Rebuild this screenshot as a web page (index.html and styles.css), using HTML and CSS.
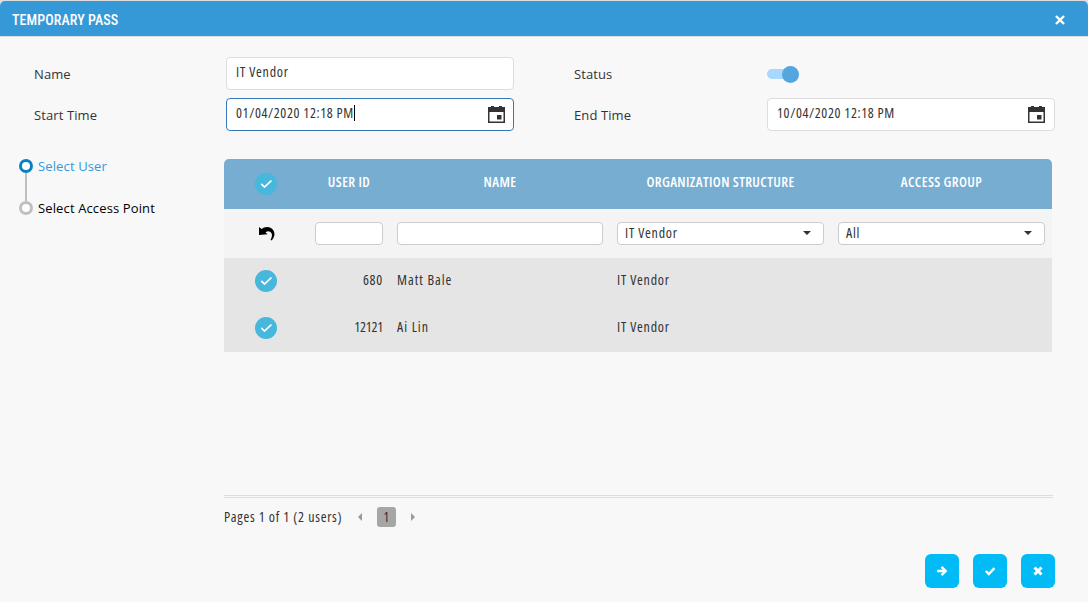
FILE: index.html
```
<!DOCTYPE html>
<html lang="en">
<head>
    <meta charset="utf-8" />
    <title>Temporary Pass</title>
    <meta name="viewport" content="width=device-width, initial-scale=1" />
    <link rel="stylesheet" href="styles.css">
</head>
<body>
    <div class="popup">
        <div class="popup-header">
            <span class="popup-title">TEMPORARY PASS</span>
            <svg class="close" width="10" height="10" viewBox="0 0 10 10"><path d="M1 1l8 8M9 1l-8 8" /></svg>
        </div>

        <div class="form">
            <label class="lbl">Name</label>
            <div class="field"><span>IT Vendor</span></div>
            <label class="lbl">Status</label>
            <div class="switch"><span class="knob"></span></div>

            <label class="lbl">Start Time</label>
            <div class="field active">
                <span class="date">01/04/2020 12:18 PM</span><i class="caret"></i>
                <svg class="cal" width="17" height="17" viewBox="0 0 17 17"><path fill-rule="evenodd" d="M0 1h3V0h3v1h5V0h3v1h3v16H0zM1.500 6v9.500h14V6zM9 9h4.500v4.500H9z" /></svg>
            </div>
            <label class="lbl">End Time</label>
            <div class="field">
                <span class="date">10/04/2020 12:18 PM</span>
                <svg class="cal" width="17" height="17" viewBox="0 0 17 17"><path fill-rule="evenodd" d="M0 1h3V0h3v1h5V0h3v1h3v16H0zM1.500 6v9.500h14V6zM9 9h4.500v4.500H9z" /></svg>
            </div>
        </div>

        <div class="content">
            <div class="steps">
                <div class="step current"><i class="dot"></i><span>Select User</span></div>
                <i class="line"></i>
                <div class="step"><i class="dot"></i><span>Select Access Point</span></div>
            </div>

            <div class="main">
                <div class="grid">
                    <div class="row head">
                        <div class="cell mid"><svg class="check" width="22" height="22" viewBox="0 0 22 22"><circle cx="11" cy="11" r="11" /><path d="M6.300 10.800l3.200 3.200 7-6.500" /></svg></div>
                        <div class="cell mid">USER ID</div>
                        <div class="cell mid">NAME</div>
                        <div class="cell mid">ORGANIZATION STRUCTURE</div>
                        <div class="cell mid">ACCESS GROUP</div>
                    </div>
                    <div class="row filter">
                        <div class="cell mid"><svg class="undo" width="16" height="15" viewBox="0 0 16 15"><path d="M0 1l2.600 2C5 .8 9 .2 12 2c4.500 2.800 4.500 8.500.6 12.500l-1-.7c2-3.500 1.800-6.600-.5-8-1.500-.9-3-.7-4.600.5L8.500 8.200 0 9z" /></svg></div>
                        <div class="cell"><div class="box"></div></div>
                        <div class="cell"><div class="box"></div></div>
                        <div class="cell"><div class="box"><span>IT Vendor</span><i class="arrow"></i></div></div>
                        <div class="cell"><div class="box"><span>All</span><i class="arrow"></i></div></div>
                    </div>
                    <div class="row">
                        <div class="cell mid"><svg class="check" width="22" height="22" viewBox="0 0 22 22"><circle cx="11" cy="11" r="11" /><path d="M6.300 10.800l3.200 3.200 7-6.500" /></svg></div>
                        <div class="cell num">680</div>
                        <div class="cell name">Matt Bale</div>
                        <div class="cell">IT Vendor</div>
                        <div class="cell"></div>
                    </div>
                    <div class="row">
                        <div class="cell mid"><svg class="check" width="22" height="22" viewBox="0 0 22 22"><circle cx="11" cy="11" r="11" /><path d="M6.300 10.800l3.200 3.200 7-6.500" /></svg></div>
                        <div class="cell num tight">12121</div>
                        <div class="cell name">Ai Lin</div>
                        <div class="cell">IT Vendor</div>
                        <div class="cell"></div>
                    </div>
                </div>

                <div class="pager">
                    <span class="pages">Pages 1 of 1 (2 users)</span>
                    <i class="prev"></i>
                    <span class="page">1</span>
                    <i class="next"></i>
                </div>
            </div>
        </div>

        <div class="buttons">
            <div class="btn"><svg width="12" height="12" viewBox="0 0 12 12"><path d="M1 6h8M5.500 1.800L9.700 6l-4.200 4.200" /></svg></div>
            <div class="btn"><svg width="12" height="12" viewBox="0 0 12 12"><path d="M1.800 6l3 3 5.700-5.800" /></svg></div>
            <div class="btn"><svg width="12" height="12" viewBox="0 0 12 12"><path class="thick" d="M2.500 2.500l7 7M9.500 2.500l-7 7" /></svg></div>
        </div>
    </div>
</body>
</html>
```
FILE: styles.css
```
* {
    box-sizing: border-box;
}

body {
    margin: 0;
    background-color: #ddd;
    color: #333;
    font-family: "Open Sans", "Noto Sans", sans-serif;
    font-size: 14px;
    font-stretch: 75%;
    letter-spacing: 0.75px;
    line-height: 18px;
    white-space: nowrap;
}

svg {
    display: block;
}

.popup {
    height: 601px;
    margin-top: 1px;
    background-color: #f8f8f8;
    border-radius: 5px 5px 0 0;
    display: flex;
    flex-direction: column;
}

.popup-header {
    height: 36px;
    flex: none;
    padding: 2px 23px 0 12px;
    background-color: #3699d7;
    border-bottom: 1px solid #ddd;
    border-radius: 5px 5px 0 0;
    color: white;
    font-family: Roboto, sans-serif;
    font-size: 14px;
    font-weight: 500;
    letter-spacing: 0.1px;
    display: flex;
    align-items: center;
    justify-content: space-between;
}

.close {
    fill: none;
    stroke: white;
    stroke-width: 2.4;
}

/* form */
.form {
    display: grid;
    grid-template-columns: 192px 288px 253px 288px;
    grid-template-rows: 33px 33px;
    row-gap: 8px;
    padding: 20px 0 0 34px;
}

.lbl {
    padding-top: 8px;
    font-size: 13px;
    font-stretch: 100%;
    letter-spacing: 0.1px;
}

.field + .lbl {
    padding-left: 60px;
}

.field {
    background-color: white;
    border: 1px solid #ddd;
    border-radius: 4px;
    padding: 0 9px 3px;
    display: flex;
    align-items: center;
}

.field.active {
    padding-right: 8px;
    border-color: #337ab7;
}

.date {
    letter-spacing: 0.62px;
}

.caret {
    width: 1px;
    height: 16px;
    background-color: #000;
}

.cal {
    margin: 3px 0 0 auto;
    fill: #333;
}

.switch {
    width: 32px;
    height: 10px;
    margin-top: 12px;
    border-radius: 5px;
    background-color: #a8d8ff;
    display: flex;
    align-items: center;
    justify-content: flex-end;
}

.knob {
    width: 17px;
    height: 17px;
    flex: none;
    border-radius: 50%;
    background-color: #54a6de;
}

/* steps + table */
.content {
    display: flex;
    padding-top: 28px;
}

.steps {
    width: 224px;
    padding-left: 19px;
    color: #000;
    font-size: 13px;
    font-stretch: 100%;
    letter-spacing: 0.13px;
}

.step {
    height: 14px;
    display: flex;
    align-items: center;
    gap: 5px;
}

.step.current {
    color: #3699d7;
}

.dot {
    width: 14px;
    height: 14px;
    border: 3px solid #bfbfbf;
    border-radius: 50%;
    background-color: white;
}

.current .dot {
    border-color: #0a80c4;
}

.line {
    display: block;
    width: 2px;
    height: 28px;
    margin-left: 6px;
    background-color: #bfbfbf;
}

.main {
    width: 830px;
}

.grid {
    width: 828px;
    height: 336px;
}

.row {
    display: grid;
    grid-template-columns: 84px 82px 220px 221px 221px;
    align-items: center;
    height: 47px;
    padding-bottom: 3px;
    background-color: #e5e5e5;
}

.row.head {
    height: 50px;
    padding-bottom: 4px;
    background-color: #77add1;
    border-radius: 5px 5px 0 0;
    color: white;
    font-weight: 600;
    letter-spacing: 0.4px;
}

.row.filter {
    height: 49px;
    padding-bottom: 0;
    background-color: #f4f4f4;
}

.cell {
    padding: 0 7px;
}

.mid {
    display: flex;
    justify-content: center;
    text-align: center;
}

.name {
    letter-spacing: 1px;
}

.num {
    text-align: right;
}

.tight {
    letter-spacing: -0.2px;
}

.box {
    height: 23px;
    background-color: white;
    border: 1px solid #ccc;
    border-radius: 4px;
    padding: 0 12px 1px 7px;
    display: flex;
    align-items: center;
    justify-content: space-between;
}

.arrow {
    border: 4px solid transparent;
    border-top-color: #333;
    border-bottom: 0;
}

.check {
    margin-top: 1px;
}

.check circle {
    fill: #47b7db;
}

.check path {
    fill: none;
    stroke: white;
    stroke-width: 1.7;
}

.head .check {
    margin-top: 4px;
}

.undo {
    margin-left: 2px;
}

.pager {
    width: 829px;
    height: 35px;
    border-top: 3px double #ddd;
    padding-top: 9px;
    display: flex;
    align-items: center;
}

.pages {
    width: 134px;
    margin-top: -3px;
    letter-spacing: 0.74px;
}

.prev,
.next {
    margin-top: -3px;
    border: 4px solid transparent;
}

.prev {
    border-right-color: #999;
    border-left: 0;
}

.next {
    border-left-color: #999;
    border-right: 0;
}

.page {
    width: 19px;
    height: 20px;
    margin: -4px 15px 0;
    border-radius: 3px;
    background-color: #a6a6a6;
    line-height: 20px;
    text-align: center;
}

.buttons {
    display: flex;
    justify-content: flex-end;
    gap: 14px;
    padding: 24px 33px 0 0;
}

.btn {
    width: 34px;
    height: 34px;
    border-radius: 6px;
    background-color: #00bbf5;
    display: flex;
    align-items: center;
    justify-content: center;
}

.btn path {
    fill: none;
    stroke: white;
    stroke-width: 2.4;
}

.btn .thick {
    stroke-width: 3;
}
```
